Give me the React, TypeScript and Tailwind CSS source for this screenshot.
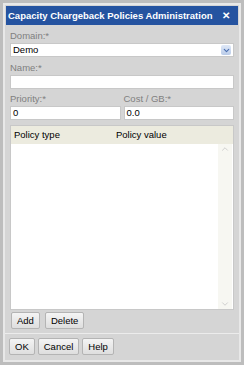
import { ChevronDown, ChevronUp } from 'lucide-react';

function Field({ label, value, className = '' }: { label: string; value?: string; className?: string }) {
  return (
    <div className={`flex flex-col ${className}`}>
      <span className="text-[9.5px] leading-[11px] text-[#808080] mb-[2px]">{label}</span>
      <div className="h-[14px] bg-white border border-[#c8c8c8] text-[9.5px] leading-[12px] text-black px-[2px]">
        {value}
      </div>
    </div>
  );
}

function Btn({ children }: { children: string }) {
  return (
    <button className="h-[17px] px-[5px] bg-gradient-to-b from-[#f4f4f4] to-[#dedede] border border-[#b4b4b4] rounded-[2px] text-[9.5px] leading-[14px] text-black">
      {children}
    </button>
  );
}

export default function App() {
  return (
    <div
      className="w-[244px] h-[365px] bg-[#bdbdbd] p-[3px] overflow-hidden"
      style={{ fontFamily: '"Liberation Sans", Arial, sans-serif' }}
    >
      <div className="h-full border-[2px] border-[#e8e8e8] bg-[#d5d5d5] flex flex-col">
        {/* title bar */}
        <div className="mx-[1px] mt-[1px] h-[19px] bg-[#2553a0] flex items-center justify-between px-[2px] whitespace-nowrap">
          <span className="text-white font-bold text-[9.5px] leading-[12px]">Capacity Chargeback Policies Administration</span>
          <span className="text-white font-bold text-[10px] leading-[12px] mr-[6px]">✕</span>
        </div>

        <div className="flex flex-col px-[5px] pt-[5px]">
          <span className="text-[9.5px] leading-[11px] text-[#808080] mb-[2px]">Domain:*</span>
          <div className="h-[14px] bg-white border border-[#c8c8c8] flex items-center justify-between text-[9.5px] leading-[12px] px-[2px]">
            <span>Demo</span>
            <span className="w-[10px] h-[10px] rounded-[2px] bg-gradient-to-b from-[#dfe8f7] to-[#b9cbe8] flex items-center justify-center">
              <ChevronDown size={9} strokeWidth={3} className="text-[#4a6fb0]" />
            </span>
          </div>

          <Field label="Name:*" className="mt-[5px]" />

          <div className="grid grid-cols-2 gap-[3px] mt-[4px]">
            <Field label="Priority:*" value="0" />
            <Field label="Cost / GB:*" value="0.0" />
          </div>

          <div className="mt-[5px] h-[185px] bg-white border border-[#c8c8c8] flex flex-col">
            <div className="h-[18px] bg-[#ecebdf] flex items-center text-[9.5px] leading-[12px] text-black px-[3px]">
              <span className="w-[102px]">Policy type</span>
              <span>Policy value</span>
            </div>
            <div className="flex-1 flex justify-end pr-[1px]">
              <div className="w-[14px] bg-[#f7f7f2] flex flex-col justify-between items-center">
                <ChevronUp size={10} strokeWidth={2} className="text-[#c8c8c8]" />
                <ChevronDown size={10} strokeWidth={2} className="text-[#c8c8c8]" />
              </div>
            </div>
          </div>

          <div className="flex gap-[5px] mt-[2px] pl-[1px]">
            <Btn>Add</Btn>
            <Btn>Delete</Btn>
          </div>
        </div>

        <div className="mt-[4px] border-t border-[#ececec]" />

        <div className="flex gap-[3px] px-[4px] pt-[4px]">
          <Btn>OK</Btn>
          <Btn>Cancel</Btn>
          <Btn>Help</Btn>
        </div>
      </div>
    </div>
  );
}
